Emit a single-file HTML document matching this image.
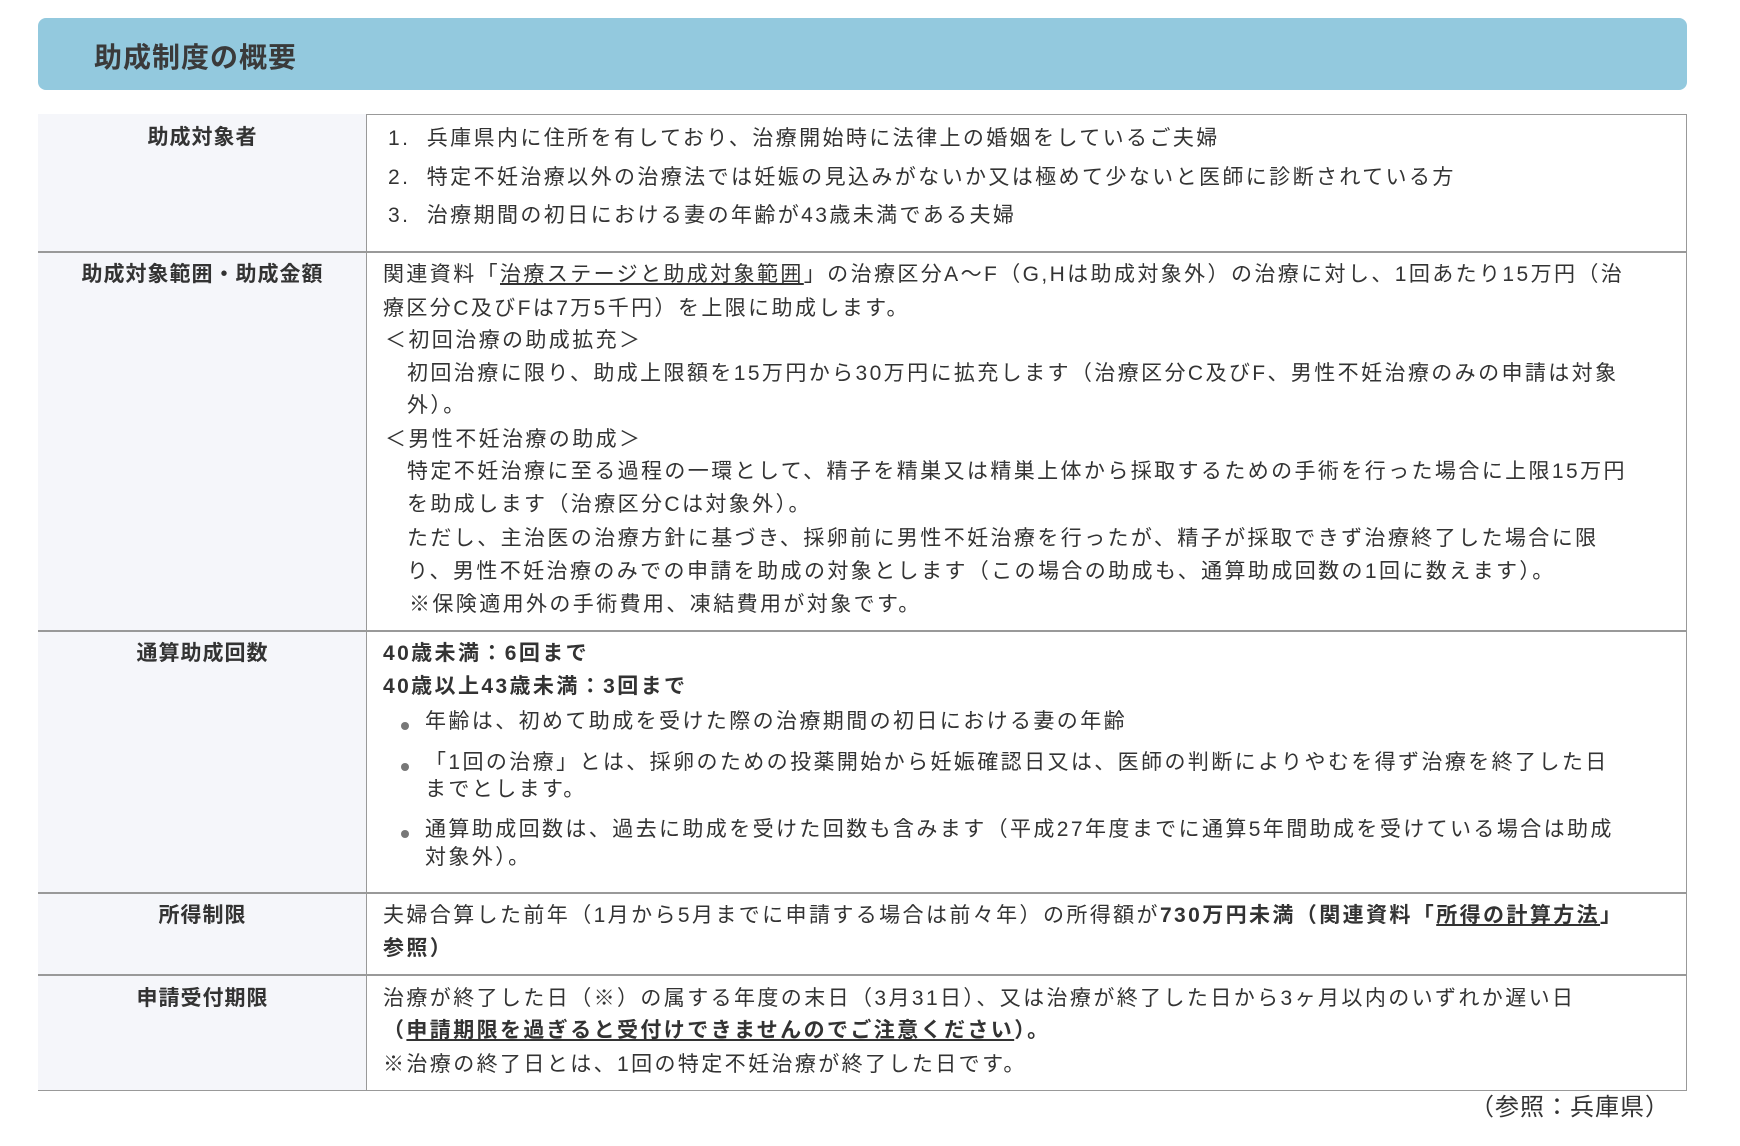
<!DOCTYPE html>
<html><head><meta charset="utf-8"><style>
body{margin:0;width:1740px;height:1146px;background:#fff;position:relative;overflow:hidden;font-family:"Liberation Sans","Noto Sans CJK JP",sans-serif;color:#333;}
.hd{position:absolute;left:38px;top:18px;width:1649px;height:72px;background:#93c9de;border-radius:8px;}
.hd span{position:absolute;left:56px;top:18px;font-size:28px;font-weight:bold;color:#3a3a3a;letter-spacing:1px;}
.tb{position:absolute;left:38px;top:114px;width:1647px;height:975px;border:1px solid #999;}
.lc{position:absolute;left:38px;top:114px;width:328px;height:976px;background:#f5f6fa;border-right:1px solid #999;}
.hl{position:absolute;left:38px;width:1649px;height:0;border-top:2px solid #999;}
.l{position:absolute;white-space:nowrap;font-size:21px;line-height:32px;letter-spacing:2.4px;}
.lab{position:absolute;left:39px;width:327px;text-align:center;font-weight:bold;font-size:21px;line-height:32px;letter-spacing:1px;}
b{font-weight:bold;}
u{text-decoration:underline;}
.dot{position:absolute;width:8px;height:8px;border-radius:50%;background:#777;}
</style></head><body>
<div class="hd"><span>助成制度の概要</span></div>
<div class="tb"></div>
<div class="lc"></div>
<div class="hl" style="top:251px"></div>
<div class="hl" style="top:630px"></div>
<div class="hl" style="top:892px"></div>
<div class="hl" style="top:974px"></div>

<div class="lab" style="top:122px">助成対象者</div>
<div class="lab" style="top:259px">助成対象範囲・助成金額</div>
<div class="lab" style="top:638px">通算助成回数</div>
<div class="lab" style="top:900px">所得制限</div>
<div class="lab" style="top:983px">申請受付期限</div>

<div class="l" style="left:388px;top:123px">1.&nbsp; 兵庫県内に住所を有しており、治療開始時に法律上の婚姻をしているご夫婦</div>
<div class="l" style="left:388px;top:162px">2.&nbsp; 特定不妊治療以外の治療法では妊娠の見込みがないか又は極めて少ないと医師に診断されている方</div>
<div class="l" style="left:388px;top:200px">3.&nbsp; 治療期間の初日における妻の年齢が43歳未満である夫婦</div>

<div class="l" style="left:383px;top:259px">関連資料「<u>治療ステージと助成対象範囲</u>」の治療区分A～F（G,Hは助成対象外）の治療に対し、1回あたり15万円（治</div>
<div class="l" style="left:383px;top:293px">療区分C及びFは7万5千円）を上限に助成します。</div>
<div class="l" style="left:385px;top:325px">＜初回治療の助成拡充＞</div>
<div class="l" style="left:407px;top:358px">初回治療に限り、助成上限額を15万円から30万円に拡充します（治療区分C及びF、男性不妊治療のみの申請は対象</div>
<div class="l" style="left:407px;top:390px">外）。</div>
<div class="l" style="left:385px;top:424px">＜男性不妊治療の助成＞</div>
<div class="l" style="left:407px;top:456px">特定不妊治療に至る過程の一環として、精子を精巣又は精巣上体から採取するための手術を行った場合に上限15万円</div>
<div class="l" style="left:407px;top:489px">を助成します（治療区分Cは対象外）。</div>
<div class="l" style="left:407px;top:523px">ただし、主治医の治療方針に基づき、採卵前に男性不妊治療を行ったが、精子が採取できず治療終了した場合に限</div>
<div class="l" style="left:407px;top:556px">り、男性不妊治療のみでの申請を助成の対象とします（この場合の助成も、通算助成回数の1回に数えます）。</div>
<div class="l" style="left:409px;top:589px">※保険適用外の手術費用、凍結費用が対象です。</div>

<div class="l" style="left:383px;top:638px"><b>40歳未満：6回まで</b></div>
<div class="l" style="left:383px;top:671px"><b>40歳以上43歳未満：3回まで</b></div>
<div class="dot" style="left:401px;top:722px"></div>
<div class="l" style="left:425px;top:706px">年齢は、初めて助成を受けた際の治療期間の初日における妻の年齢</div>
<div class="dot" style="left:401px;top:763px"></div>
<div class="l" style="left:425px;top:747px">「1回の治療」とは、採卵のための投薬開始から妊娠確認日又は、医師の判断によりやむを得ず治療を終了した日</div>
<div class="l" style="left:425px;top:774px">までとします。</div>
<div class="dot" style="left:401px;top:830px"></div>
<div class="l" style="left:425px;top:814px">通算助成回数は、過去に助成を受けた回数も含みます（平成27年度までに通算5年間助成を受けている場合は助成</div>
<div class="l" style="left:425px;top:842px">対象外）。</div>

<div class="l" style="left:383px;top:900px">夫婦合算した前年（1月から5月までに申請する場合は前々年）の所得額が<b>730万円未満（関連資料「<u>所得の計算方法</u>」</b></div>
<div class="l" style="left:383px;top:933px"><b>参照）</b></div>

<div class="l" style="left:383px;top:983px">治療が終了した日（※）の属する年度の末日（3月31日）、又は治療が終了した日から3ヶ月以内のいずれか遅い日</div>
<div class="l" style="left:383px;top:1015px"><b>（<u>申請期限を過ぎると受付けできませんのでご注意ください</u>）。</b></div>
<div class="l" style="left:383px;top:1049px">※治療の終了日とは、1回の特定不妊治療が終了した日です。</div>

<div class="l" style="right:70px;top:1092px;font-size:24px;letter-spacing:1px">（参照：兵庫県）</div>
</body></html>
